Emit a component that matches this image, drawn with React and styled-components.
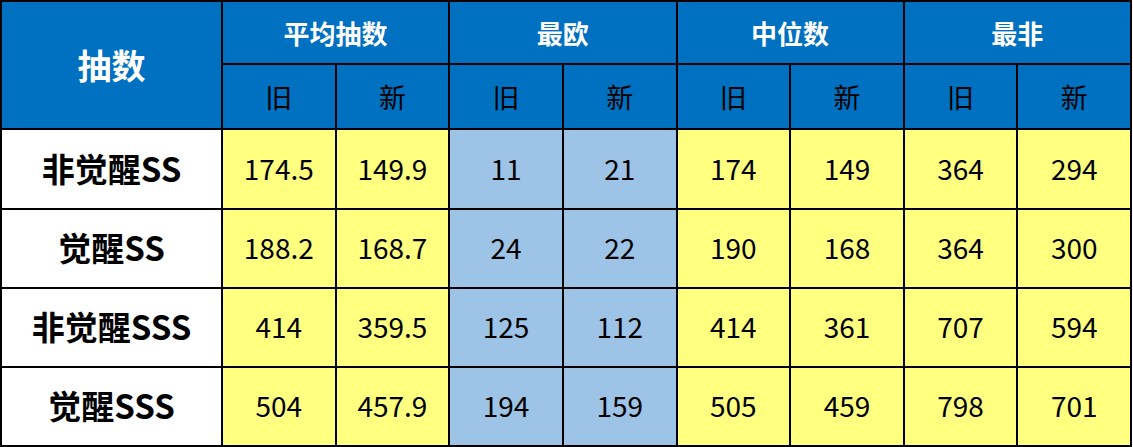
import React from "react";
import styled, { createGlobalStyle } from "styled-components";

const Global = createGlobalStyle`
  html, body { margin: 0; padding: 0; background: #ffffff; }
  body { font-family: "Noto Sans CJK SC", "Noto Sans", sans-serif; }
`;

const Grid = styled.div`
  display: grid;
  width: 1132px;
  box-sizing: border-box;
  grid-template-columns: 219px repeat(8, 1fr);
  grid-template-rows: 61px 63px 78px 77px 77px 77px;
  gap: 2px;
  padding: 2px;
  background: #000000;
`;

const Cell = styled.div`
  display: flex;
  align-items: center;
  justify-content: center;
  box-sizing: border-box;
  font-family: "Noto Sans CJK SC", "Noto Sans", sans-serif;
  white-space: nowrap;
  line-height: 1;
`;

const CornerHead = styled(Cell)`
  grid-row: span 2;
  background: #0070c0;
  color: #ffffff;
  font-weight: 700;
  font-size: 34px;
`;

const GroupHead = styled(Cell)`
  grid-column: span 2;
  background: #0070c0;
  color: #ffffff;
  font-weight: 700;
  font-size: 26px;
`;

const SubHead = styled(Cell)`
  background: #0070c0;
  color: #000000;
  font-size: 27px;
  font-weight: 400;
`;

const RowLabel = styled(Cell)`
  background: #ffffff;
  color: #000000;
  font-weight: 700;
  font-size: 33px;
  padding-bottom: 2px;
`;

const Value = styled(Cell)`
  background: ${(p) => (p.$tone === "blue" ? "#9dc3e6" : "#ffff80")};
  color: #000000;
  font-size: 28px;
  font-weight: 400;
  padding-bottom: 3px;
`;

const groups = ["平均抽数", "最欧", "中位数", "最非"];

const rows = [
  { label: "非觉醒SS", values: ["174.5", "149.9", "11", "21", "174", "149", "364", "294"] },
  { label: "觉醒SS", values: ["188.2", "168.7", "24", "22", "190", "168", "364", "300"] },
  { label: "非觉醒SSS", values: ["414", "359.5", "125", "112", "414", "361", "707", "594"] },
  { label: "觉醒SSS", values: ["504", "457.9", "194", "159", "505", "459", "798", "701"] },
];

export default function App() {
  return (
    <>
      <Global />
      <Grid>
        <CornerHead>抽数</CornerHead>
        {groups.map((g) => (
          <GroupHead key={g}>{g}</GroupHead>
        ))}
        {groups.map((g) => (
          <React.Fragment key={g + "-sub"}>
            <SubHead>旧</SubHead>
            <SubHead>新</SubHead>
          </React.Fragment>
        ))}
        {rows.map((r) => (
          <React.Fragment key={r.label}>
            <RowLabel>{r.label}</RowLabel>
            {r.values.map((v, i) => (
              <Value key={i} $tone={i === 2 || i === 3 ? "blue" : "yellow"}>
                {v}
              </Value>
            ))}
          </React.Fragment>
        ))}
      </Grid>
    </>
  );
}
